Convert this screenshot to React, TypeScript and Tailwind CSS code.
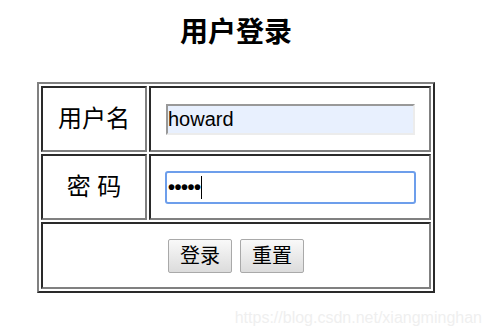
import React from "react";

const font = {
  fontFamily: '"Liberation Sans", Arial, "Noto Sans CJK SC", sans-serif',
};

// inset cell border like an old html table with border="2"
const cell =
  "border-2 border-t-[#2a2a2a] border-l-[#2a2a2a] border-b-[#808080] border-r-[#808080] flex items-center";

function LoginButton({ label }: { label: string }) {
  return (
    <button
      type="button"
      className="w-[64px] h-[34px] border border-[#a9a9a9] rounded-[2px] bg-gradient-to-b from-[#f9f9f9] to-[#dcdcdc] text-[20px] leading-[22px] text-black"
    >
      {label}
    </button>
  );
}

export default function App() {
  return (
    <div className="w-[493px] h-[335px] bg-white overflow-hidden text-black" style={font}>
      <div className="ml-[37px] w-[398px] pt-[19px]">
        <h1 className="text-center text-[28px] leading-[28px] font-bold">用户登录</h1>

        {/* form table */}
        <div className="mt-[35px] border-2 border-t-[#808080] border-l-[#808080] border-b-[#2a2a2a] border-r-[#2a2a2a] p-[2px] grid grid-cols-[106px_282px] grid-rows-[66px_66px_67px] gap-[2px]">
          <div className={`${cell} justify-center text-[24px]`}>用户名</div>
          <div className={`${cell} pl-[15px]`}>
            <div className="w-[249px] h-[31px] border-2 border-t-[#999999] border-l-[#999999] border-b-[#ececec] border-r-[#ececec] bg-[#e8f0fe] flex items-center text-[20px] leading-[23px]">
              howard
            </div>
          </div>

          <div className={`${cell} justify-center text-[24px]`}>密 码</div>
          <div className={`${cell} pl-[14px]`}>
            <div className="w-[251px] h-[33px] border-2 border-[#6d9eeb] rounded-[3px] bg-white flex items-center pl-[1px]">
              <span className="text-[20px] leading-[23px] font-bold tracking-[-0.5px]">•••••</span>
              <span className="w-px h-[23px] bg-black" />
            </div>
          </div>

          <div className={`${cell} col-span-2 justify-center gap-[8px]`}>
            <LoginButton label="登录" />
            <LoginButton label="重置" />
          </div>
        </div>
      </div>

      {/* watermark */}
      <div className="mt-[16px] pr-[11px] flex justify-end text-[16px] leading-[18px] text-[#efefef]">
        https://blog.csdn.net/xiangminghan
      </div>
    </div>
  );
}
